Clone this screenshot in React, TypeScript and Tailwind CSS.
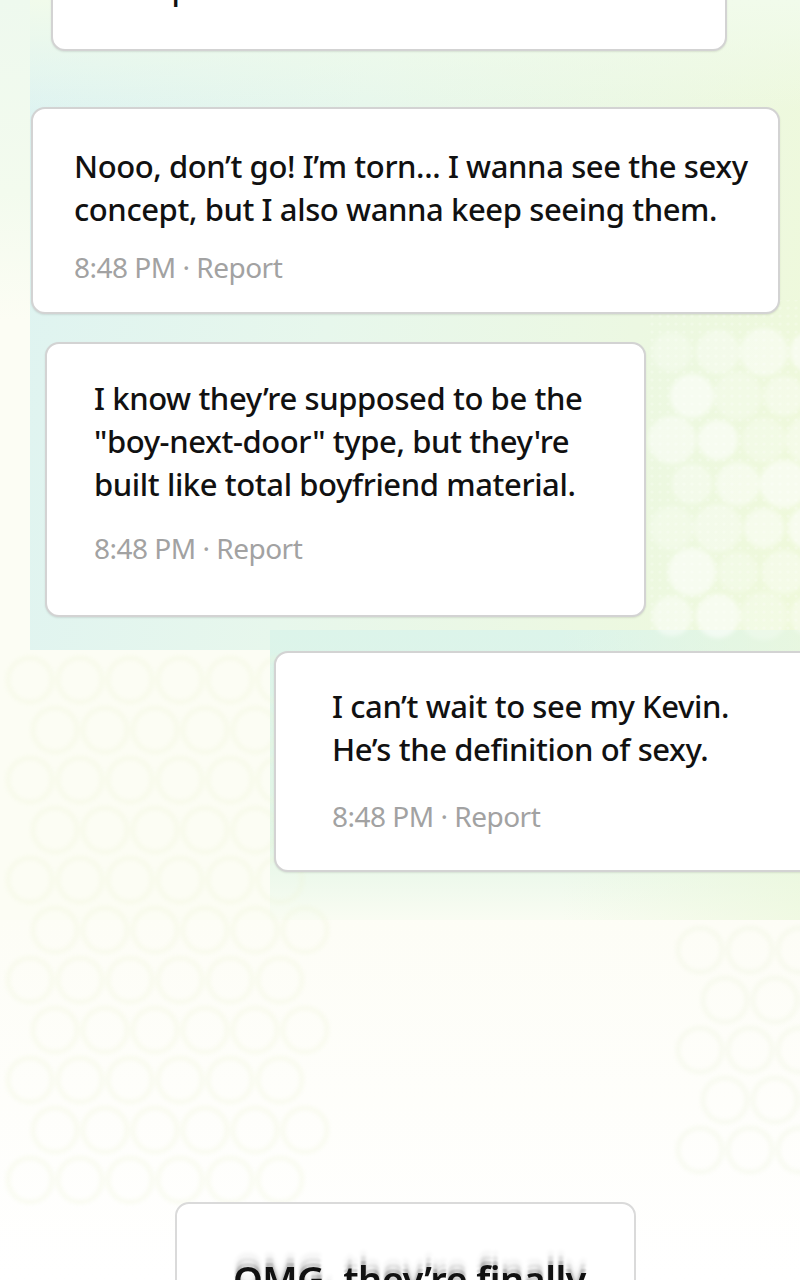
import React from "react";

type Comment = {
  lines: string[];
  time: string;
};

const comments: Comment[] = [
  {
    lines: ["Nooo, don’t go! I’m torn... I wanna see the sexy", "concept, but I also wanna keep seeing them."],
    time: "8:48 PM",
  },
  {
    lines: ["I know they’re supposed to be the", "\"boy-next-door\" type, but they're", "built like total boyfriend material."],
    time: "8:48 PM",
  },
  {
    lines: ["I can’t wait to see my Kevin.", "He’s the definition of sexy."],
    time: "8:48 PM",
  },
];

// soft bokeh dots and rings painted over the pastel wash
const Bokeh = () => {
  const dots: { cx: number; cy: number; r: number; o: number }[] = [];
  for (let row = 0; row < 7; row++) {
    for (let col = 0; col < 4; col++) {
      dots.push({
        cx: 672 + col * 46 + (row % 2) * 20,
        cy: 352 + row * 44,
        r: 20 + ((row + col) % 3) * 2,
        o: 0.25 + ((row * 3 + col) % 4) * 0.1,
      });
    }
  }
  const rings: { cx: number; cy: number }[] = [];
  for (let row = 0; row < 11; row++) {
    for (let col = 0; col < 6; col++) {
      rings.push({ cx: 30 + col * 50 + (row % 2) * 25, cy: 680 + row * 50 });
    }
  }
  const ringsRight: { cx: number; cy: number }[] = [];
  for (let row = 0; row < 5; row++) {
    for (let col = 0; col < 3; col++) {
      ringsRight.push({ cx: 700 + col * 50 + (row % 2) * 25, cy: 950 + row * 50 });
    }
  }
  return (
    <svg className="absolute inset-0 h-full w-full" viewBox="0 0 800 1280" preserveAspectRatio="none">
      <defs>
        <pattern id="dotgrid" width="8" height="8" patternUnits="userSpaceOnUse">
          <circle cx="4" cy="4" r="1.6" fill="#ffffff" opacity="0.4" />
        </pattern>
        <filter id="soft">
          <feGaussianBlur stdDeviation="2" />
        </filter>
      </defs>
      <rect x="650" y="300" width="150" height="330" fill="url(#dotgrid)" opacity="0.6" />
      <g filter="url(#soft)">
        {dots.map((d, i) => (
          <circle key={i} cx={d.cx} cy={d.cy} r={d.r} fill="#ffffff" opacity={d.o} />
        ))}
      </g>
      <g opacity="0.35" filter="url(#soft)">
        {rings.map((d, i) => (
          <circle key={`l${i}`} cx={d.cx} cy={d.cy} r="22" fill="none" stroke="#eef4d6" strokeWidth="4" />
        ))}
        {ringsRight.map((d, i) => (
          <circle key={`r${i}`} cx={d.cx} cy={d.cy} r="22" fill="none" stroke="#eaf2d8" strokeWidth="4" />
        ))}
      </g>
    </svg>
  );
};

const Meta = ({ time, className }: { time: string; className: string }) => (
  <div className={`whitespace-nowrap text-[28px] font-normal leading-[30px] tracking-[-0.5px] text-[#a2a2a2] ${className}`}>
    {time} · Report
  </div>
);

const Lines = ({ lines }: { lines: string[] }) => (
  <div className="text-[31px] font-medium leading-[43px] tracking-[-0.4px] text-[#111111]">
    {lines.map((line, i) => (
      <div key={i} className="whitespace-nowrap">
        {line}
      </div>
    ))}
  </div>
);

export default function App() {
  return (
    <div className="relative h-[1280px] w-[800px] overflow-hidden bg-[#fcfdf4] font-['Noto_Sans',sans-serif]">
      {/* pastel background wash */}
      <div className="absolute inset-0">
        <div className="absolute left-0 top-0 h-[320px] w-[40px] bg-[linear-gradient(180deg,#eef9ee_0%,#f3fbee_60%,#fcfdf4_100%)]" />
        <div className="absolute left-[30px] right-0 top-0 h-[650px] bg-[linear-gradient(100deg,#def3f1_0%,#e7f7ec_40%,#ecf8e2_75%,#eff9da_100%)]" />
        <div className="absolute left-[30px] right-0 top-0 h-[110px] bg-[linear-gradient(180deg,#f1fbeb_0%,rgba(240,250,235,0)_100%)]" />
        <div className="absolute left-[270px] right-0 top-[630px] h-[300px] bg-[linear-gradient(180deg,#dcf4ea_0%,#e3f6e6_70%,rgba(252,253,244,0)_100%)]" />
        <div className="absolute left-[560px] right-0 top-[630px] h-[300px] bg-[linear-gradient(90deg,rgba(236,248,222,0)_0%,#ecf8dc_100%)] opacity-70" />
        <div className="absolute left-0 right-0 top-[920px] h-[360px] bg-[linear-gradient(180deg,#fdfdf6_0%,#ffffff_100%)]" />
        <Bokeh />
      </div>

      <div className="relative flex flex-col">
        {/* tail of the previous comment */}
        <div className="ml-[51px] mt-[-109px] flex h-[160px] w-[676px] flex-col justify-end rounded-[14px] border-2 border-[#d3d3d3] bg-white pb-[39px] pl-[26px] shadow-[0_1px_2px_rgba(0,0,0,0.1)]">
          <div className="text-[31px] font-medium leading-[43px] tracking-[-0.4px] text-[#111111]">I’m so proud of them</div>
        </div>

        <div className="ml-[31px] mt-[56px] w-[749px] rounded-[14px] border-2 border-[#d3d3d3] bg-white pb-[30px] pl-[41px] pt-[36px] shadow-[0_1px_2px_rgba(0,0,0,0.1)]">
          <Lines lines={comments[0].lines} />
          <Meta time={comments[0].time} className="mt-[21px]" />
        </div>

        <div className="ml-[45px] mt-[28px] w-[601px] rounded-[14px] border-2 border-[#d3d3d3] bg-white pb-[52px] pl-[47px] pt-[33px] shadow-[0_1px_2px_rgba(0,0,0,0.1)]">
          <Lines lines={comments[1].lines} />
          <Meta time={comments[1].time} className="mt-[27px]" />
        </div>

        <div className="ml-[274px] mt-[34px] w-[560px] rounded-[14px] border-2 border-[#d3d3d3] bg-white pb-[39px] pl-[56px] pt-[32px] shadow-[0_1px_2px_rgba(0,0,0,0.1)]">
          <Lines lines={comments[2].lines} />
          <Meta time={comments[2].time} className="mt-[30px]" />
        </div>

        {/* next comment sliding in */}
        <div className="ml-[175px] mt-[330px] h-[200px] w-[461px] rounded-[14px] border-2 border-[#dadada] bg-white pl-[56px] pt-[52px]">
          <div className="whitespace-nowrap text-[38px] font-semibold leading-[46px] tracking-[-0.6px] text-[#111111] blur-[0.6px] [text-shadow:0_-4px_2px_rgba(0,0,0,0.18),0_-9px_3px_rgba(0,0,0,0.1),0_-14px_4px_rgba(0,0,0,0.05)]">
            OMG, they’re finally
          </div>
        </div>
      </div>
    </div>
  );
}
